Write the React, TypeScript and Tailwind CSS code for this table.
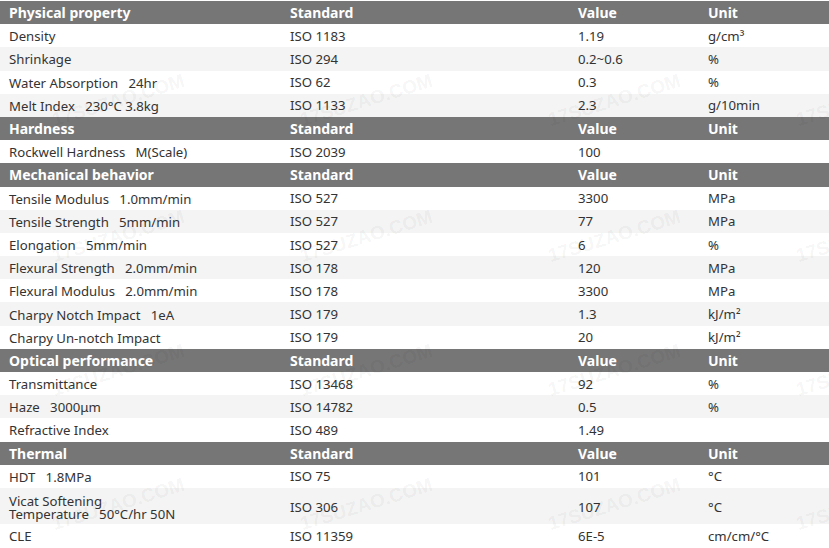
type Row = { name: string; std: string; value: string; unit: string; tall?: boolean }
type Section = { title: string; rows: Row[] }

const sections: Section[] = [
  {
    title: 'Physical property',
    rows: [
      { name: 'Density', std: 'ISO 1183', value: '1.19', unit: 'g/cm³' },
      { name: 'Shrinkage', std: 'ISO 294', value: '0.2~0.6', unit: '%' },
      { name: 'Water Absorption   24hr', std: 'ISO 62', value: '0.3', unit: '%' },
      { name: 'Melt Index   230°C 3.8kg', std: 'ISO 1133', value: '2.3', unit: 'g/10min' },
    ],
  },
  {
    title: 'Hardness',
    rows: [{ name: 'Rockwell Hardness   M(Scale)', std: 'ISO 2039', value: '100', unit: '' }],
  },
  {
    title: 'Mechanical behavior',
    rows: [
      { name: 'Tensile Modulus   1.0mm/min', std: 'ISO 527', value: '3300', unit: 'MPa' },
      { name: 'Tensile Strength   5mm/min', std: 'ISO 527', value: '77', unit: 'MPa' },
      { name: 'Elongation   5mm/min', std: 'ISO 527', value: '6', unit: '%' },
      { name: 'Flexural Strength   2.0mm/min', std: 'ISO 178', value: '120', unit: 'MPa' },
      { name: 'Flexural Modulus   2.0mm/min', std: 'ISO 178', value: '3300', unit: 'MPa' },
      { name: 'Charpy Notch Impact   1eA', std: 'ISO 179', value: '1.3', unit: 'kJ/m²' },
      { name: 'Charpy Un-notch Impact', std: 'ISO 179', value: '20', unit: 'kJ/m²' },
    ],
  },
  {
    title: 'Optical performance',
    rows: [
      { name: 'Transmittance', std: 'ISO 13468', value: '92', unit: '%' },
      { name: 'Haze   3000μm', std: 'ISO 14782', value: '0.5', unit: '%' },
      { name: 'Refractive Index', std: 'ISO 489', value: '1.49', unit: '' },
    ],
  },
  {
    title: 'Thermal',
    rows: [
      { name: 'HDT   1.8MPa', std: 'ISO 75', value: '101', unit: '°C' },
      { name: 'Vicat Softening\nTemperature   50°C/hr 50N', std: 'ISO 306', value: '107', unit: '°C', tall: true },
      { name: 'CLE', std: 'ISO 11359', value: '6E-5', unit: 'cm/cm/°C' },
    ],
  },
]

const marksX = [57, 305, 553, 801]
const marksY = [92, 228, 362, 496]

function HeaderRow({ title }: { title: string }) {
  return (
    <div className="flex h-[23.2px] items-center bg-[#767676] text-[14px] font-bold text-white">
      <div className="w-[281px] pl-[9px]">{title}</div>
      <div className="w-[288px] pl-[9px]">Standard</div>
      <div className="w-[130px] pl-[9px]">Value</div>
      <div className="w-[130px] pl-[9px]">Unit</div>
    </div>
  )
}

function DataRow({ row, shaded }: { row: Row; shaded: boolean }) {
  return (
    <div
      className={`flex items-center text-[13.2px] text-[#333] ${
        row.tall ? 'h-[36px] pt-[4px]' : 'h-[23.2px] pt-[2px]'
      } ${shaded ? 'bg-[#f4f4f4]' : 'bg-white'}`}
    >
      <div className="w-[281px] whitespace-pre pl-[9px] leading-[13px]">{row.name}</div>
      <div className="w-[288px] pl-[9px]">{row.std}</div>
      <div className="w-[130px] pl-[9px]">{row.value}</div>
      <div className="w-[130px] pl-[9px]">{row.unit}</div>
    </div>
  )
}

export default function App() {
  return (
    <div className="relative h-[548px] w-[829px] overflow-hidden bg-white pt-px font-['Noto_Sans',sans-serif]">
      {sections.map((s) => (
        <div key={s.title}>
          <HeaderRow title={s.title} />
          {s.rows.map((r, i) => (
            <DataRow key={r.name} row={r} shaded={i % 2 === 1} />
          ))}
        </div>
      ))}

      {/* watermark */}
      {marksY.map((y) =>
        marksX.map((x) => (
          <div
            key={`${x}-${y}`}
            className="pointer-events-none absolute origin-bottom-left -rotate-[17deg] whitespace-nowrap font-['Liberation_Sans',sans-serif] text-[19px] font-bold text-black/[0.05]"
            style={{ left: x, top: y + 14 }}
          >
            17SUZAO.COM
          </div>
        ))
      )}
    </div>
  )
}
